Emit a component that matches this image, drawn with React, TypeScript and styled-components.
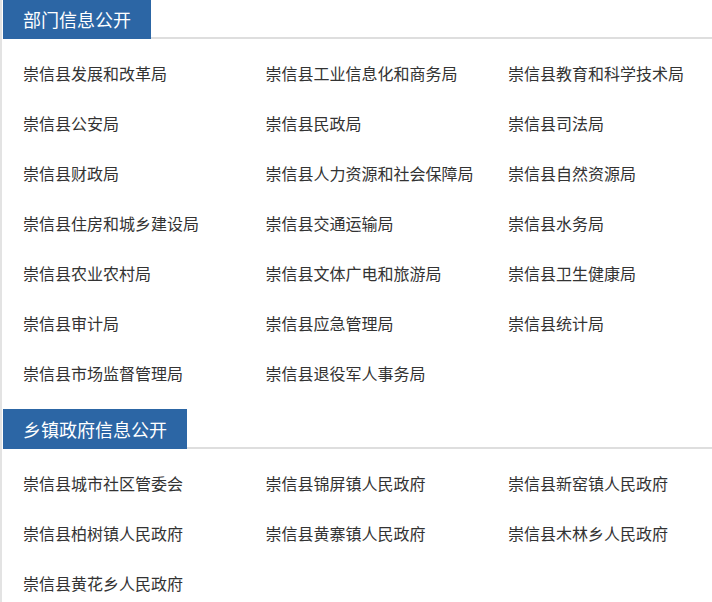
import React from 'react';
import styled, { createGlobalStyle } from 'styled-components';

const GlobalStyle = createGlobalStyle`
  html, body {
    margin: 0;
    padding: 0;
    background: #fff;
    overflow: hidden;
  }
  body {
    font-family: "Noto Sans CJK SC", "Noto Sans", sans-serif;
    color: #333;
  }
  ul {
    list-style: none;
    margin: 0;
    padding: 0;
  }
`;

// 部门
const DEPARTMENTS = [
  '崇信县发展和改革局',
  '崇信县工业信息化和商务局',
  '崇信县教育和科学技术局',
  '崇信县公安局',
  '崇信县民政局',
  '崇信县司法局',
  '崇信县财政局',
  '崇信县人力资源和社会保障局',
  '崇信县自然资源局',
  '崇信县住房和城乡建设局',
  '崇信县交通运输局',
  '崇信县水务局',
  '崇信县农业农村局',
  '崇信县文体广电和旅游局',
  '崇信县卫生健康局',
  '崇信县审计局',
  '崇信县应急管理局',
  '崇信县统计局',
  '崇信县市场监督管理局',
  '崇信县退役军人事务局',
];

// 乡镇
const TOWNS = [
  '崇信县城市社区管委会',
  '崇信县锦屏镇人民政府',
  '崇信县新窑镇人民政府',
  '崇信县柏树镇人民政府',
  '崇信县黄寨镇人民政府',
  '崇信县木林乡人民政府',
  '崇信县黄花乡人民政府',
];

const SECTIONS = [
  { title: '部门信息公开', items: DEPARTMENTS },
  { title: '乡镇政府信息公开', items: TOWNS },
];

export default function App() {
  return (
    <React.Fragment>
      <GlobalStyle />
      <Page>
        {SECTIONS.map(section => (
          <Section key={section.title}>
            <Header>
              <Tab>{section.title}</Tab>
            </Header>
            <List>
              {section.items.map(item => (
                <Item key={item}>
                  <a href="#">{item}</a>
                </Item>
              ))}
            </List>
          </Section>
        ))}
      </Page>
    </React.Fragment>
  );
}

const Page = styled.div`
  width: 100%;
  overflow: hidden;
  margin-top: -1px;
  border-left: 2px solid #e3e3e3;
  padding-left: 1px;
  box-sizing: border-box;
`;

const Section = styled.div`
  display: flex;
  flex-direction: column;
`;

const Header = styled.div`
  display: flex;
  height: 40px;
  box-sizing: border-box;
  border-bottom: 2px solid #dedede;
`;

const Tab = styled.h3`
  margin: 0 0 -2px;
  height: 40px;
  padding: 0 20px;
  background: #2c66a5;
  color: #fff;
  font-size: 18px;
  font-weight: normal;
  line-height: 40px;
  white-space: nowrap;
`;

const List = styled.ul`
  display: grid;
  grid-template-columns: repeat(3, 242.5px);
  padding: 11px 0 9px 20px !important;
`;

const Item = styled.li`
  height: 50px;
  line-height: 46px;
  font-size: 16px;
  white-space: nowrap;

  a {
    color: #333;
    text-decoration: none;
  }
`;
